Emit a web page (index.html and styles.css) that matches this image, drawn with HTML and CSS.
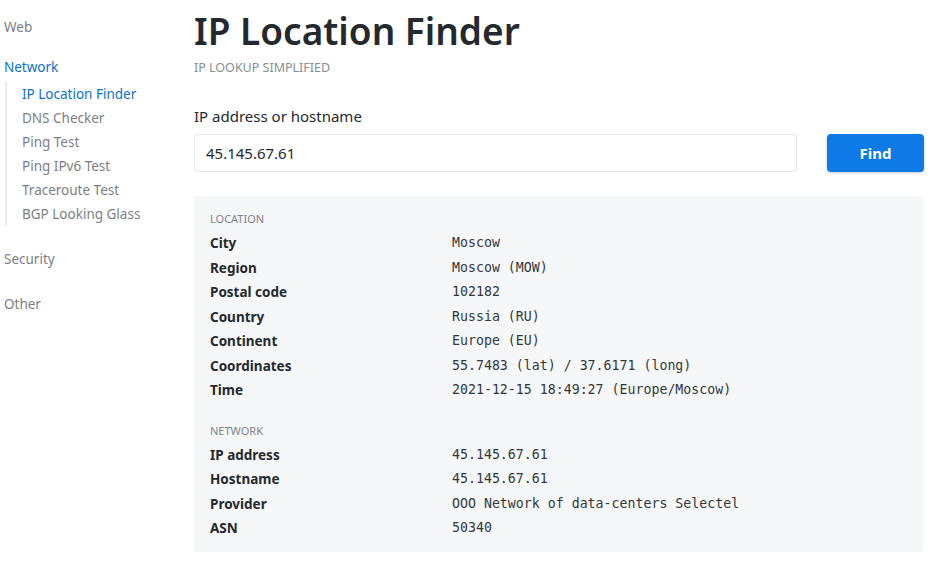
FILE: index.html
```html
<!DOCTYPE html>
<html lang="en">
<head>
    <meta charset="UTF-8">
    <meta name="viewport" content="width=device-width, initial-scale=1.0">
    <title>IP Location Finder</title>
    <link rel="stylesheet" href="styles.css">
</head>
<body>
    <nav class="sidebar">
        <div class="group">
            <a class="group-title" href="#">Web</a>
        </div>
        <div class="group">
            <a class="group-title active" href="#">Network</a>
            <ul class="submenu">
                <li><a class="active" href="#">IP Location Finder</a></li>
                <li><a href="#">DNS Checker</a></li>
                <li><a href="#">Ping Test</a></li>
                <li><a href="#">Ping IPv6 Test</a></li>
                <li><a href="#">Traceroute Test</a></li>
                <li><a href="#">BGP Looking Glass</a></li>
            </ul>
        </div>
        <div class="group">
            <a class="group-title" href="#">Security</a>
        </div>
        <div class="group">
            <a class="group-title" href="#">Other</a>
        </div>
    </nav>

    <main class="content">
        <h1>IP Location Finder</h1>
        <p class="subtitle">IP lookup simplified</p>

        <form class="lookup" onsubmit="return false">
            <label for="host">IP address or hostname</label>
            <div class="lookup-row">
                <input id="host" type="text" value="45.145.67.61">
                <button type="submit">Find</button>
            </div>
        </form>

        <section class="result">
            <h2>Location</h2>
            <dl>
                <dt>City</dt><dd>Moscow</dd>
                <dt>Region</dt><dd>Moscow (MOW)</dd>
                <dt>Postal code</dt><dd>102182</dd>
                <dt>Country</dt><dd>Russia (RU)</dd>
                <dt>Continent</dt><dd>Europe (EU)</dd>
                <dt>Coordinates</dt><dd>55.7483 (lat) / 37.6171 (long)</dd>
                <dt>Time</dt><dd>2021-12-15 18:49:27 (Europe/Moscow)</dd>
            </dl>

            <h2>Network</h2>
            <dl>
                <dt>IP address</dt><dd>45.145.67.61</dd>
                <dt>Hostname</dt><dd>45.145.67.61</dd>
                <dt>Provider</dt><dd>OOO Network of data-centers Selectel</dd>
                <dt>ASN</dt><dd>50340</dd>
            </dl>
        </section>
    </main>
</body>
</html>
```

FILE: styles.css
```css
body {
    font-family: "Noto Sans", "Open Sans", sans-serif;
    margin: 0;
    display: flex;
    color: #24292e;
    background-color: #fff;
}
a {
    text-decoration: none;
}

/* menu lateral */
.sidebar {
    width: 190px;
    padding: 15px 0 0 4px;
    font-size: 13.5px;
    flex-shrink: 0;
}
.group + .group {
    margin-top: 16px;
}
.group + .group + .group {
    margin-top: 21px;
}
.group-title {
    display: block;
    line-height: 24px;
    color: #7a7f85;
}
.group-title.active {
    color: #0b72cf;
}
.submenu {
    list-style: none;
    margin: 3px 0 4px 1px;
    padding: 0 0 0 15px;
    border-left: 2px solid #e8eaed;
}
.submenu li a {
    display: block;
    line-height: 24px;
    color: #7a7f85;
}
.submenu li a.active {
    color: #0b72cf;
}

/* conteudo */
.content {
    flex: 1;
    padding: 7px 12px 0 0;
}
h1 {
    font-size: 37px;
    font-weight: 600;
    line-height: 48px;
    margin: 0;
    color: #24292e;
}
.subtitle {
    margin: 5px 0 0;
    font-size: 12.5px;
    line-height: 16px;
    text-transform: uppercase;
    color: #868e96;
}
.lookup {
    margin-top: 30px;
}
.lookup label {
    display: block;
    font-size: 15px;
    line-height: 20px;
    color: #24292e;
}
.lookup-row {
    display: flex;
    gap: 30px;
    margin-top: 8px;
}
.lookup input {
    flex: 1;
    height: 38px;
    box-sizing: border-box;
    padding: 0 11px;
    font-family: inherit;
    font-size: 15px;
    color: #24292e;
    border: 1px solid #e3e5e8;
    border-radius: 4px;
}
.lookup button {
    width: 97px;
    height: 38px;
    font-family: inherit;
    font-size: 15px;
    font-weight: 700;
    color: #fff;
    background-color: #0d7ae6;
    border: none;
    border-radius: 4px;
    box-shadow: 0 1px 3px rgba(0, 0, 0, 0.2);
}

.result {
    margin-top: 24px;
    padding: 14px 16px 11px;
    background-color: #f6f7f9;
    border-radius: 4px;
}
.result h2 {
    margin: 0;
    font-size: 11px;
    font-weight: 400;
    line-height: 18px;
    text-transform: uppercase;
    color: #7d848b;
}
.result dl + h2 {
    margin-top: 19px;
}
.result dl {
    display: grid;
    grid-template-columns: 242px 1fr;
    margin: 3px 0 0;
}
.result dt {
    font-size: 13.5px;
    font-weight: 700;
    line-height: 24.5px;
    color: #24292e;
}
.result dd {
    margin: 0;
    font-family: "DejaVu Sans Mono", "Liberation Mono", monospace;
    font-size: 13.25px;
    line-height: 24.5px;
    color: #33373b;
}
```
